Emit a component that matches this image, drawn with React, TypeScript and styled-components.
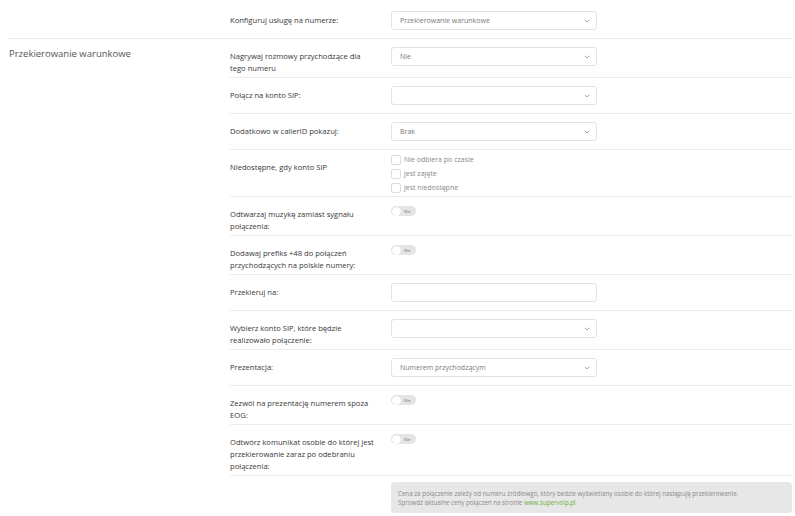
import React from "react";
import styled, { createGlobalStyle } from "styled-components";

const GlobalStyle = createGlobalStyle`
  html, body {
    margin: 0;
    padding: 0;
    background: #ffffff;
  }
  body {
    font-family: "Open Sans", "Liberation Sans", sans-serif;
    color: #333333;
  }
`;

type RowDef =
  | { kind: "select"; label: string; value?: string }
  | { kind: "input"; label: string }
  | { kind: "toggle"; label: string }
  | { kind: "checks"; label: string; options: string[] };

const rows: RowDef[] = [
  { kind: "select", label: "Nagrywaj rozmowy przychodzące dla tego numeru", value: "Nie" },
  { kind: "select", label: "Połącz na konto SIP:" },
  { kind: "select", label: "Dodatkowo w callerID pokazuj:", value: "Brak" },
  {
    kind: "checks",
    label: "Niedostępne, gdy konto SIP",
    options: ["Nie odbiera po czasie", "jest zajęte", "jest niedostępne"],
  },
  { kind: "toggle", label: "Odtwarzaj muzykę zamiast sygnału połączenia:" },
  { kind: "toggle", label: "Dodawaj prefiks +48 do połączeń przychodzących na polskie numery:" },
  { kind: "input", label: "Przekieruj na:" },
  { kind: "select", label: "Wybierz konto SIP, które będzie realizowało połączenie:" },
  { kind: "select", label: "Prezentacja:", value: "Numerem przychodzącym" },
  { kind: "toggle", label: "Zezwól na prezentację numerem spoza EOG:" },
  {
    kind: "toggle",
    label: "Odtwórz komunikat osobie do której jest przekierowanie zaraz po odebraniu połączenia:",
  },
];

const Chevron = () => (
  <svg width="6" height="4" viewBox="0 0 6 4" fill="none">
    <path d="M0.8 0.8 L3 3 L5.2 0.8" stroke="#999" strokeWidth="0.9" />
  </svg>
);

const SelectBox = ({ value }: { value?: string }) => (
  <Select>
    <SelectValue>{value || ""}</SelectValue>
    <Chevron />
  </Select>
);

const Toggle = () => (
  <Switch>
    <Knob />
    <SwitchText>Nie</SwitchText>
  </Switch>
);

const Control = ({ row }: { row: RowDef }) => {
  if (row.kind === "select") return <SelectBox value={row.value} />;
  if (row.kind === "input") return <TextInput />;
  if (row.kind === "toggle") return <Toggle />;
  return (
    <CheckList>
      {row.options.map((o) => (
        <CheckItem key={o}>
          <CheckBox />
          <CheckLabel>{o}</CheckLabel>
        </CheckItem>
      ))}
    </CheckList>
  );
};

const App = () => {
  return (
    <Page>
      <GlobalStyle />
      <TopRow>
        <div />
        <FieldRow $last>
          <FieldLabel>Konfiguruj usługę na numerze:</FieldLabel>
          <ControlCell>
            <SelectBox value="Przekierowanie warunkowe" />
          </ControlCell>
        </FieldRow>
      </TopRow>

      <Section>
        <SectionTitle>Przekierowanie warunkowe</SectionTitle>
        <Fields>
          {rows.map((r) => (
            <FieldRow key={r.label}>
              <FieldLabel>{r.label}</FieldLabel>
              <ControlCell>
                <Control row={r} />
              </ControlCell>
            </FieldRow>
          ))}
          <InfoBox>
            Cena za połączenie zależy od numeru źródłowgo, który bedzie wyświetlany osobie do
            której następuję przekierowanie.
            <br />
            Sprowdź aktualne ceny połączeń na stronie <InfoLink>www.supervoip.pl</InfoLink>
          </InfoBox>
        </Fields>
      </Section>
    </Page>
  );
};

export default App;

// ===== styles =====

const Page = styled.div`
  width: 795px;
  height: 516px;
  box-sizing: border-box;
  padding: 3px 3px 0 8px;
  overflow: hidden;
`;

const TopRow = styled.div`
  display: grid;
  grid-template-columns: 222px 1fr;
  border-bottom: 1px solid #e8e8e8;
`;

const Section = styled.div`
  display: grid;
  grid-template-columns: 222px 1fr;
`;

const SectionTitle = styled.div`
  padding: 8px 0 0 1px;
  font-size: 9.5px;
  color: #555555;
`;

const Fields = styled.div`
  display: flex;
  flex-direction: column;
`;

const FieldRow = styled.div<{ $last?: boolean }>`
  display: grid;
  grid-template-columns: 145px 206px;
  column-gap: 16px;
  align-items: start;
  padding: 8px 0 3px;
  border-bottom: ${(p) => (p.$last ? "none" : "1px solid #ececec")};
`;

const FieldLabel = styled.div`
  padding-top: 3px;
  font-size: 7.6px;
  font-weight: 500;
  line-height: 12px;
  color: #383838;
`;

const ControlCell = styled.div`
  padding-bottom: 5px;
`;

const Select = styled.div`
  height: 19px;
  box-sizing: border-box;
  border: 1px solid #e2e2e2;
  border-radius: 3px;
  padding: 0 6px 0 8px;
  display: flex;
  align-items: center;
  justify-content: space-between;
  background: #fff;
`;

const SelectValue = styled.span`
  font-size: 7px;
  color: #7a7a7a;
`;

const TextInput = styled.div`
  height: 19px;
  box-sizing: border-box;
  border: 1px solid #e2e2e2;
  border-radius: 3px;
  background: #fff;
`;

const Switch = styled.div`
  width: 25px;
  height: 10px;
  margin-top: 1px;
  border-radius: 5px;
  background: #e4e4e4;
  display: flex;
  align-items: center;
  padding: 0 1px;
  box-sizing: border-box;
  gap: 3px;
`;

const Knob = styled.div`
  width: 9px;
  height: 9px;
  border-radius: 50%;
  background: #ffffff;
  box-shadow: 0 0 1px rgba(0, 0, 0, 0.15);
`;

const SwitchText = styled.span`
  font-size: 4px;
  color: #888;
  font-weight: 600;
`;

const CheckList = styled.div`
  display: flex;
  flex-direction: column;
  gap: 4px;
  margin: -3px 0 -5px;
`;

const CheckItem = styled.div`
  height: 10px;
  display: flex;
  align-items: center;
  gap: 3px;
`;

const CheckBox = styled.div`
  width: 10px;
  height: 10px;
  box-sizing: border-box;
  border: 1px solid #dcdcdc;
  border-radius: 2px;
`;

const CheckLabel = styled.span`
  font-size: 7px;
  line-height: 10px;
  color: #888888;
`;

const InfoBox = styled.div`
  margin: 6px 0 0 161px;
  padding: 7px 7px 6px;
  background: #e7e7e7;
  border-radius: 4px;
  font-size: 6.2px;
  line-height: 9px;
  color: #8a8a8a;
`;

const InfoLink = styled.span`
  color: #6fae3a;
`;
